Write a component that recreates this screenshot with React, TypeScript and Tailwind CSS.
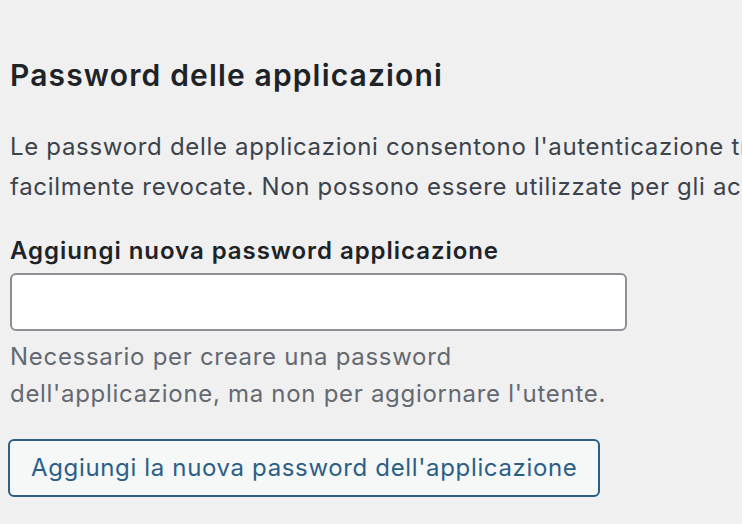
export default function App() {
  return (
    <div
      className="min-h-[524px] w-[742px] overflow-hidden bg-[#f0f0f1] pl-[10px] pt-[55px]"
      style={{ fontFamily: 'Inter, "Noto Sans", sans-serif' }}
    >
      <h2 className="text-[30px] font-semibold leading-[40px] tracking-[1.15px] text-[#1d2327]">
        Password delle applicazioni
      </h2>

      <div className="mt-[32px] text-[24px] leading-[40px] tracking-[0.68px] text-[#3c434a]">
        <p className="whitespace-nowrap">
          Le password delle applicazioni consentono l'autenticazione tramite sistemi non interattivi
        </p>
        <p className="whitespace-nowrap">facilmente revocate. Non possono essere utilizzate per gli accessi</p>
      </div>

      <label className="mt-[29px] block text-[24px] font-semibold leading-[30px] tracking-[0.95px] text-[#1d2327]">
        Aggiungi nuova password applicazione
      </label>
      <input
        type="text"
        className="mt-[7px] block h-[58px] w-[617px] rounded-[6px] border-2 border-[#8c8f94] bg-white px-3 text-[20px] outline-none"
      />
      <p className="mt-[7px] text-[24px] leading-[37px] tracking-[0.7px] text-[#646970]">
        Necessario per creare una password
        <br />
        dell'applicazione, ma non per aggiornare l'utente.
      </p>

      <button
        type="button"
        className="ml-[-2px] mt-[27px] block h-[58px] rounded-[6px] border-2 border-[#2b5f86] bg-[#f6f7f7] px-[21px] text-[24px] tracking-[0.65px] text-[#2b5f86]"
      >
        Aggiungi la nuova password dell'applicazione
      </button>
    </div>
  )
}
